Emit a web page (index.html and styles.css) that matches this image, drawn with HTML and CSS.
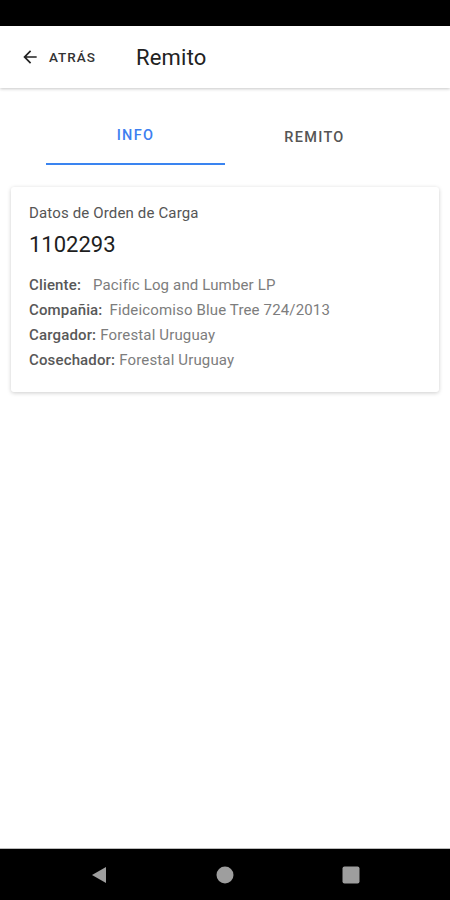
FILE: index.html
```html
<!DOCTYPE html>
<html lang="es">
<head>
<meta charset="utf-8">
<title>Remito</title>
<link rel="stylesheet" href="styles.css">
</head>
<body>
<div class="screen">
  <div class="status-bar"></div>
  <header class="app-bar">
    <button class="back">
      <svg class="back-icon" viewBox="0 0 24 24" width="20" height="20"><path d="M20 11H7.83l5.59-5.59L12 4l-8 8 8 8 1.41-1.41L7.83 13H20v-2z" fill="#222"/></svg>
      <span class="back-text">ATRÁS</span>
    </button>
    <h1 class="title">Remito</h1>
  </header>
  <main class="content">
    <nav class="tabs">
      <div class="tab active">INFO</div>
      <div class="tab">REMITO</div>
    </nav>
    <section class="card">
      <div class="card-sub">Datos de Orden de Carga</div>
      <div class="card-num">1102293</div>
      <div class="rows">
        <div class="row"><span class="lbl gap-lg">Cliente:</span><span class="val">Pacific Log and Lumber LP</span></div>
        <div class="row"><span class="lbl gap-md">Compañia:</span><span class="val">Fideicomiso Blue Tree 724/2013</span></div>
        <div class="row"><span class="lbl gap-sm">Cargador:</span><span class="val">Forestal Uruguay</span></div>
        <div class="row"><span class="lbl gap-sm">Cosechador:</span><span class="val">Forestal Uruguay</span></div>
      </div>
    </section>
  </main>
  <footer class="nav-bar">
    <svg class="nav-icon" viewBox="0 0 16 18" width="16" height="18"><path d="M15 1 L1 9 L15 17 Z" fill="#9e9e9e"/></svg>
    <svg class="nav-icon" viewBox="0 0 18 18" width="18" height="18"><circle cx="9" cy="9" r="8.5" fill="#9e9e9e"/></svg>
    <svg class="nav-icon" viewBox="0 0 18 18" width="18" height="18"><rect x="0.5" y="0.5" width="17" height="17" rx="2" fill="#9e9e9e"/></svg>
  </footer>
</div>
</body>
</html>
```
FILE: styles.css
```css
* { box-sizing: border-box; }
html, body { margin: 0; padding: 0; }
body {
  font-family: Roboto, "Noto Sans", sans-serif;
  background: #fff;
  color: #222;
}
.screen {
  width: 450px;
  height: 900px;
  display: flex;
  flex-direction: column;
  overflow: hidden;
}
.status-bar {
  height: 26px;
  background: #000;
  flex: none;
}
.app-bar {
  height: 62px;
  flex: none;
  display: flex;
  align-items: center;
  background: #fff;
  box-shadow: 0 1px 3px rgba(0,0,0,0.22);
  position: relative;
  z-index: 1;
}
.back {
  display: flex;
  align-items: center;
  border: 0;
  background: none;
  padding: 0 0 0 20px;
  margin: 0;
  font-family: inherit;
  cursor: pointer;
  height: 100%;
}
.back-icon { display: block; }
.back-text {
  margin-left: 9px;
  font-size: 13.5px;
  font-weight: 500;
  letter-spacing: 1px;
  color: #333;
}
.title {
  margin: 0 0 0 40px;
  font-size: 22px;
  font-weight: 400;
  color: #222;
  letter-spacing: 0.2px;
}
.content {
  flex: 1;
  background: #fff;
  padding: 0 11px;
}
.tabs {
  display: flex;
  padding: 0 35px;
  margin-bottom: 22px;
}
.tab {
  width: 179px;
  height: 77px;
  display: flex;
  align-items: flex-end;
  justify-content: center;
  font-size: 14.5px;
  font-weight: 500;
  letter-spacing: 1.3px;
  color: #555;
  padding-bottom: 19px;
}
.tab.active {
  color: #3d7ff0;
  border-bottom: 2px solid #3a84f0;
}
.card {
  background: #fff;
  border-radius: 3px;
  box-shadow: 0 1px 4px rgba(0,0,0,0.2);
  padding: 16px 18px 19px;
}
.card-sub {
  font-size: 15px;
  color: #555;
  line-height: 20px;
  letter-spacing: 0.15px;
}
.card-num {
  font-size: 22px;
  color: #1e1e1e;
  line-height: 26px;
  margin-top: 9px;
}
.rows {
  margin-top: 15px;
}
.row {
  font-size: 15px;
  line-height: 25px;
  white-space: nowrap;
  letter-spacing: 0.15px;
}
.lbl {
  font-weight: 500;
  color: #585858;
}
.val { color: #7d7d7d; }
.gap-lg { margin-right: 12px; }
.gap-md { margin-right: 7px; }
.gap-sm { margin-right: 4px; }
.nav-bar {
  height: 52px;
  flex: none;
  background: #000;
  display: flex;
  align-items: center;
  border-top: 1px solid #bbb;
}
.nav-icon:nth-child(1) { margin-left: 91px; }
.nav-icon:nth-child(2) { margin-left: 109px; }
.nav-icon:nth-child(3) { margin-left: 108px; }
```
